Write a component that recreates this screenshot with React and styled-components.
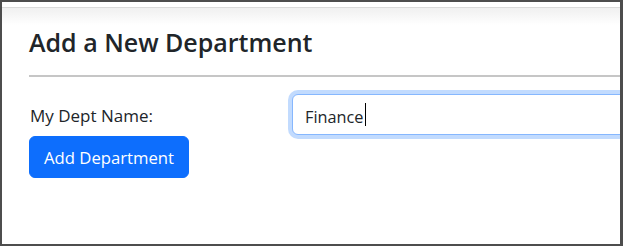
import React from "react";
import styled, { createGlobalStyle } from "styled-components";

const GlobalStyle = createGlobalStyle`
  html, body { margin: 0; padding: 0; background: #ffffff; }
  * { box-sizing: border-box; }
`;

const Frame = styled.div`
  width: 623px;
  height: 246px;
  border-style: solid;
  border-color: #4d4d4d;
  border-width: 2px 3px 2px 2px;
  overflow: hidden;
  display: flex;
  flex-direction: column;
  background: #ffffff;
  font-family: "Open Sans", "Noto Sans", sans-serif;
  color: #212529;
`;

const TopStrip = styled.div`
  flex: none;
  margin-top: 5px;
  height: 18px;
  border-top: 1px solid #dadada;
  background: linear-gradient(#f0f0f0, #ffffff);
`;

const Content = styled.div`
  flex: none;
  width: 820px;
  padding-left: 27px;
`;

const Title = styled.h3`
  margin: 2px 0 0;
  font-size: 25px;
  font-weight: 600;
  line-height: 30px;
  color: #212529;
`;

const Rule = styled.hr`
  margin: 18px 0 0;
  border: 0;
  height: 2px;
  background: #c6c6c6;
`;

const FormRow = styled.div`
  margin-top: 17px;
  display: grid;
  grid-template-columns: 263px 1fr;
  align-items: center;
`;

const Label = styled.label`
  font-size: 17px;
  line-height: 24px;
  padding-left: 1px;
  padding-top: 3px;
`;

const InputWrap = styled.div`
  position: relative;
`;

const TextInput = styled.input`
  display: block;
  width: 100%;
  height: 41px;
  padding: 4px 12px 0;
  font-family: "Open Sans", "Noto Sans", sans-serif;
  font-size: 16.3px;
  color: #212529;
  background: #ffffff;
  border: 1px solid #86b7fe;
  border-radius: 6px;
  box-shadow: 0 0 0 4px rgba(13, 110, 253, 0.25);
  outline: none;
  caret-color: transparent;
`;

const Caret = styled.span`
  position: absolute;
  left: 73px;
  top: 9px;
  width: 1px;
  height: 23px;
  background: #000000;
`;

const PrimaryButton = styled.button`
  margin-top: 1px;
  height: 42px;
  padding: 0 14px;
  font-family: "Open Sans", "Noto Sans", sans-serif;
  font-size: 16.7px;
  color: #ffffff;
  background: #0d6efd;
  border: 1px solid #0d6efd;
  border-radius: 6px;
  cursor: pointer;
`;

export default function App() {
  return (
    <>
      <GlobalStyle />
      <Frame>
        <TopStrip />
        <Content>
          <Title>Add a New Department</Title>
          <Rule />
          <FormRow>
            <Label htmlFor="dept">My Dept Name:</Label>
            <InputWrap>
              <TextInput id="dept" defaultValue="Finance" />
              <Caret />
            </InputWrap>
          </FormRow>
          <PrimaryButton type="button">Add Department</PrimaryButton>
        </Content>
      </Frame>
    </>
  );
}
